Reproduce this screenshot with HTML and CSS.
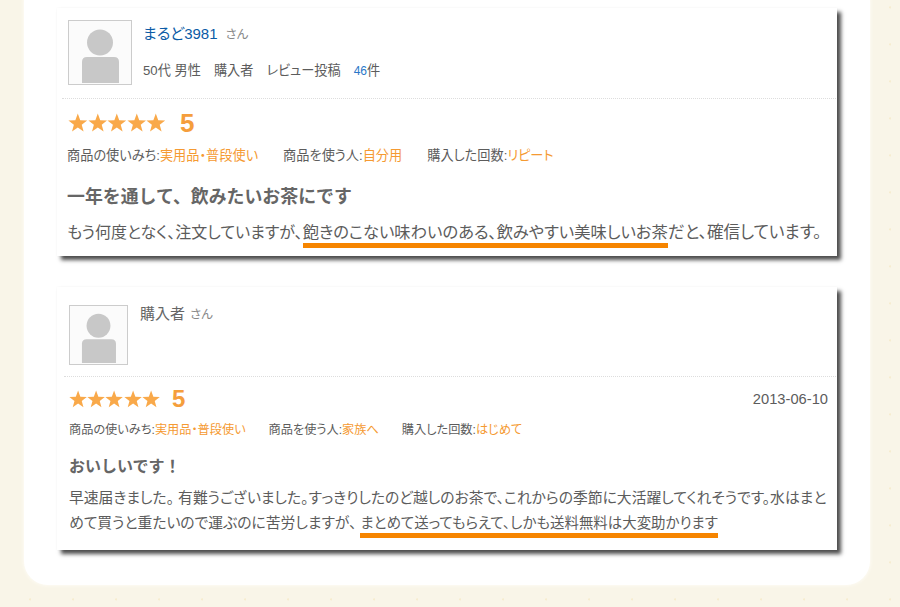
FILE: index.html
```html
<!DOCTYPE html>
<html lang="ja">
<head>
<meta charset="utf-8">
<title>レビュー</title>
<link rel="stylesheet" href="styles.css">
</head>
<body>
<svg class="defs" width="0" height="0" aria-hidden="true">
  <symbol id="star" viewBox="0 0 20 20"><path d="M10 .6l2.500 6.700 7.100.3-5.600 4.400 1.900 6.900L10 14.900 4.100 18.900l1.900-6.900L.4 7.600l7.100-.3z"/></symbol>
  <symbol id="user" viewBox="0 0 62 63" preserveAspectRatio="none"><circle cx="31" cy="21.500" r="13"/><path d="M13 41q0-5 5-5h27q5 0 5 5v21H13z"/></symbol>
</svg>
<main class="panel">
  <article class="card card-a">
    <header class="head">
      <svg class="avatar"><use href="#user"/></svg>
      <div class="who">
        <p class="name"><a class="link">まるど3981</a><span class="san">さん</span></p>
        <p class="info"><span>50代 男性</span><span>購入者</span><span>レビュー投稿</span><span><b class="count">46</b>件</span></p>
      </div>
    </header>
    <section class="review">
      <div class="rating">
        <span class="stars"><svg><use href="#star"/></svg><svg><use href="#star"/></svg><svg><use href="#star"/></svg><svg><use href="#star"/></svg><svg><use href="#star"/></svg></span>
        <span class="score">5</span>
      </div>
      <ul class="meta">
        <li>商品の使いみち:<em>実用品・普段使い</em></li>
        <li>商品を使う人:<em>自分用</em></li>
        <li>購入した回数:<em>リピート</em></li>
      </ul>
      <h2 class="title">一年を通して、飲みたいお茶にです</h2>
      <p class="body">もう何度となく、注文していますが、<span class="mark">飽きのこない味わいのある、飲みやすい美味しいお茶</span><span class="tail">だと、確信しています。</span></p>
    </section>
  </article>
  <article class="card card-b">
    <header class="head">
      <svg class="avatar"><use href="#user"/></svg>
      <div class="who">
        <p class="name">購入者<span class="san">さん</span></p>
      </div>
    </header>
    <section class="review">
      <div class="rating">
        <span class="stars"><svg><use href="#star"/></svg><svg><use href="#star"/></svg><svg><use href="#star"/></svg><svg><use href="#star"/></svg><svg><use href="#star"/></svg></span>
        <span class="score">5</span>
        <time class="date">2013-06-10</time>
      </div>
      <ul class="meta">
        <li>商品の使いみち:<em>実用品・普段使い</em></li>
        <li>商品を使う人:<em>家族へ</em></li>
        <li>購入した回数:<em>はじめて</em></li>
      </ul>
      <h2 class="title">おいしいです！</h2>
      <p class="body">早速届きました。 有難うございました。すっきりしたのど越しのお茶で、これからの季節に大活躍してくれそうです。水はまと<br>めて買うと重たいので運ぶのに苦労しますが、<span class="mark">まとめて送ってもらえて、しかも送料無料は大変助かります</span></p>
    </section>
  </article>
</main>
</body>
</html>
```
FILE: styles.css
```css
* { box-sizing: border-box; }
html, body { height: 100%; }
body {
  margin: 0;
  overflow: hidden;
  font-family: "Liberation Sans", "Noto Sans CJK JP", sans-serif;
  font-feature-settings: "palt";
  color: #555;
  background-color: #f9f5e8;
  background-image:
    radial-gradient(circle at 30% 40%, #f1dfae 0 .6px, transparent 1.200px),
    radial-gradient(circle at 70% 20%, #f6ecd0 0 .8px, transparent 1.400px);
  background-size: 97px 61px, 43px 37px;
}
.defs { position: absolute; }
p, h2, ul { margin: 0; padding: 0; }
ul { list-style: none; }
em { font-style: normal; color: #f59a32; }

.panel {
  width: 846px;
  height: 585px;
  margin-left: 24px;
  padding: 8px 0 0 33px;
  background: #fff;
  border-radius: 0 0 24px 24px;
  box-shadow: 0 0 3px 1px #fdfbf4;
}
.card {
  width: 780px;
  background: #fff;
  box-shadow: 4px 4px 4px #4d4d4d, 0 0 2px #f4f4f4;
}
.card-a { height: 248px; margin-bottom: 31px; }
.card-b { height: 263px; }

.head { display: flex; }
.card-a .head { height: 90px; padding: 12px 0 0 6px; margin-left: 5px; }
.card-b .head { height: 89px; padding: 18px 0 0 5px; margin-left: 7px; }

.avatar {
  flex: none;
  background: #fbfbfb;
  border: 1px solid #ccc;
  fill: #c8c8c8;
}
.card-a .avatar { width: 64px; height: 65px; }
.card-b .avatar { width: 59px; height: 60px; }

.who { color: #666; }
.card-a .who { margin-left: 11px; }
.card-b .who { margin-left: 12px; margin-top: -1px; }
.name { white-space: nowrap; }
.card-a .name { font-size: 15px; line-height: 28px; }
.card-b .name { font-size: 15px; line-height: 20px; }
.link { color: #0b5ba6; }
.san { margin-left: 8px; font-size: 12.500px; color: #888; }
.card-b .san { margin-left: 5px; }
.info { display: flex; gap: 13px; margin-top: 12px; font-size: 13.200px; line-height: 20px; color: #5c5c5c; }
.count { font-weight: normal; font-size: 12px; color: #2a78c8; }

.review { border-top: 1px dotted #ddd; }
.card-a .review { margin: 0 1px 0 5px; padding: 0 0 0 5px; }
.card-b .review { margin: 0 1px 0 7px; padding: 0 8px 0 5px; }

.rating { display: flex; align-items: center; }
.stars { display: flex; fill: #f9a94a; }
.stars svg { display: block; }
.card-a .rating { height: 47px; padding-top: 1px; }
.card-a .stars { margin-left: 1px; }
.card-b .rating { height: 44px; }
.card-a .stars svg { width: 19.600px; height: 19.600px; }
.card-b .stars svg { width: 18.200px; height: 18.200px; }
.score { font-weight: bold; color: #f59e3c; }
.card-a .score { font-size: 26px; margin-left: 14px; }
.card-b .score { font-size: 24px; margin-left: 12px; }
.date { margin-left: auto; font-size: 14.700px; color: #5c5c5c; }

.meta { display: flex; color: #5c5c5c; white-space: nowrap; }
.card-a .meta { gap: 25px; font-size: 13.200px; line-height: 20px; }
.card-b .meta { gap: 23px; font-size: 12.200px; line-height: 18px; }

.title { font-weight: bold; color: #666; font-feature-settings: normal; }
.card-a .title { margin-top: 18px; font-size: 17.900px; line-height: 26px; }
.card-b .title { margin-top: 16px; font-size: 16px; line-height: 24px; }

.body { color: #5c5c5c; white-space: nowrap; }
.card-a .body { margin-top: 9px; font-size: 16px; line-height: 26px; }
.card-a .mark { font-size: 16.300px; }
.tail { font-size: 16.600px; }
.card-b .body { margin-top: 7px; font-size: 14.800px; line-height: 25px; }
.card-b .mark { margin-left: 4px; font-size: 14.450px; }
.mark { padding-bottom: 2px; border-bottom: 5px solid #f68500; }
```
